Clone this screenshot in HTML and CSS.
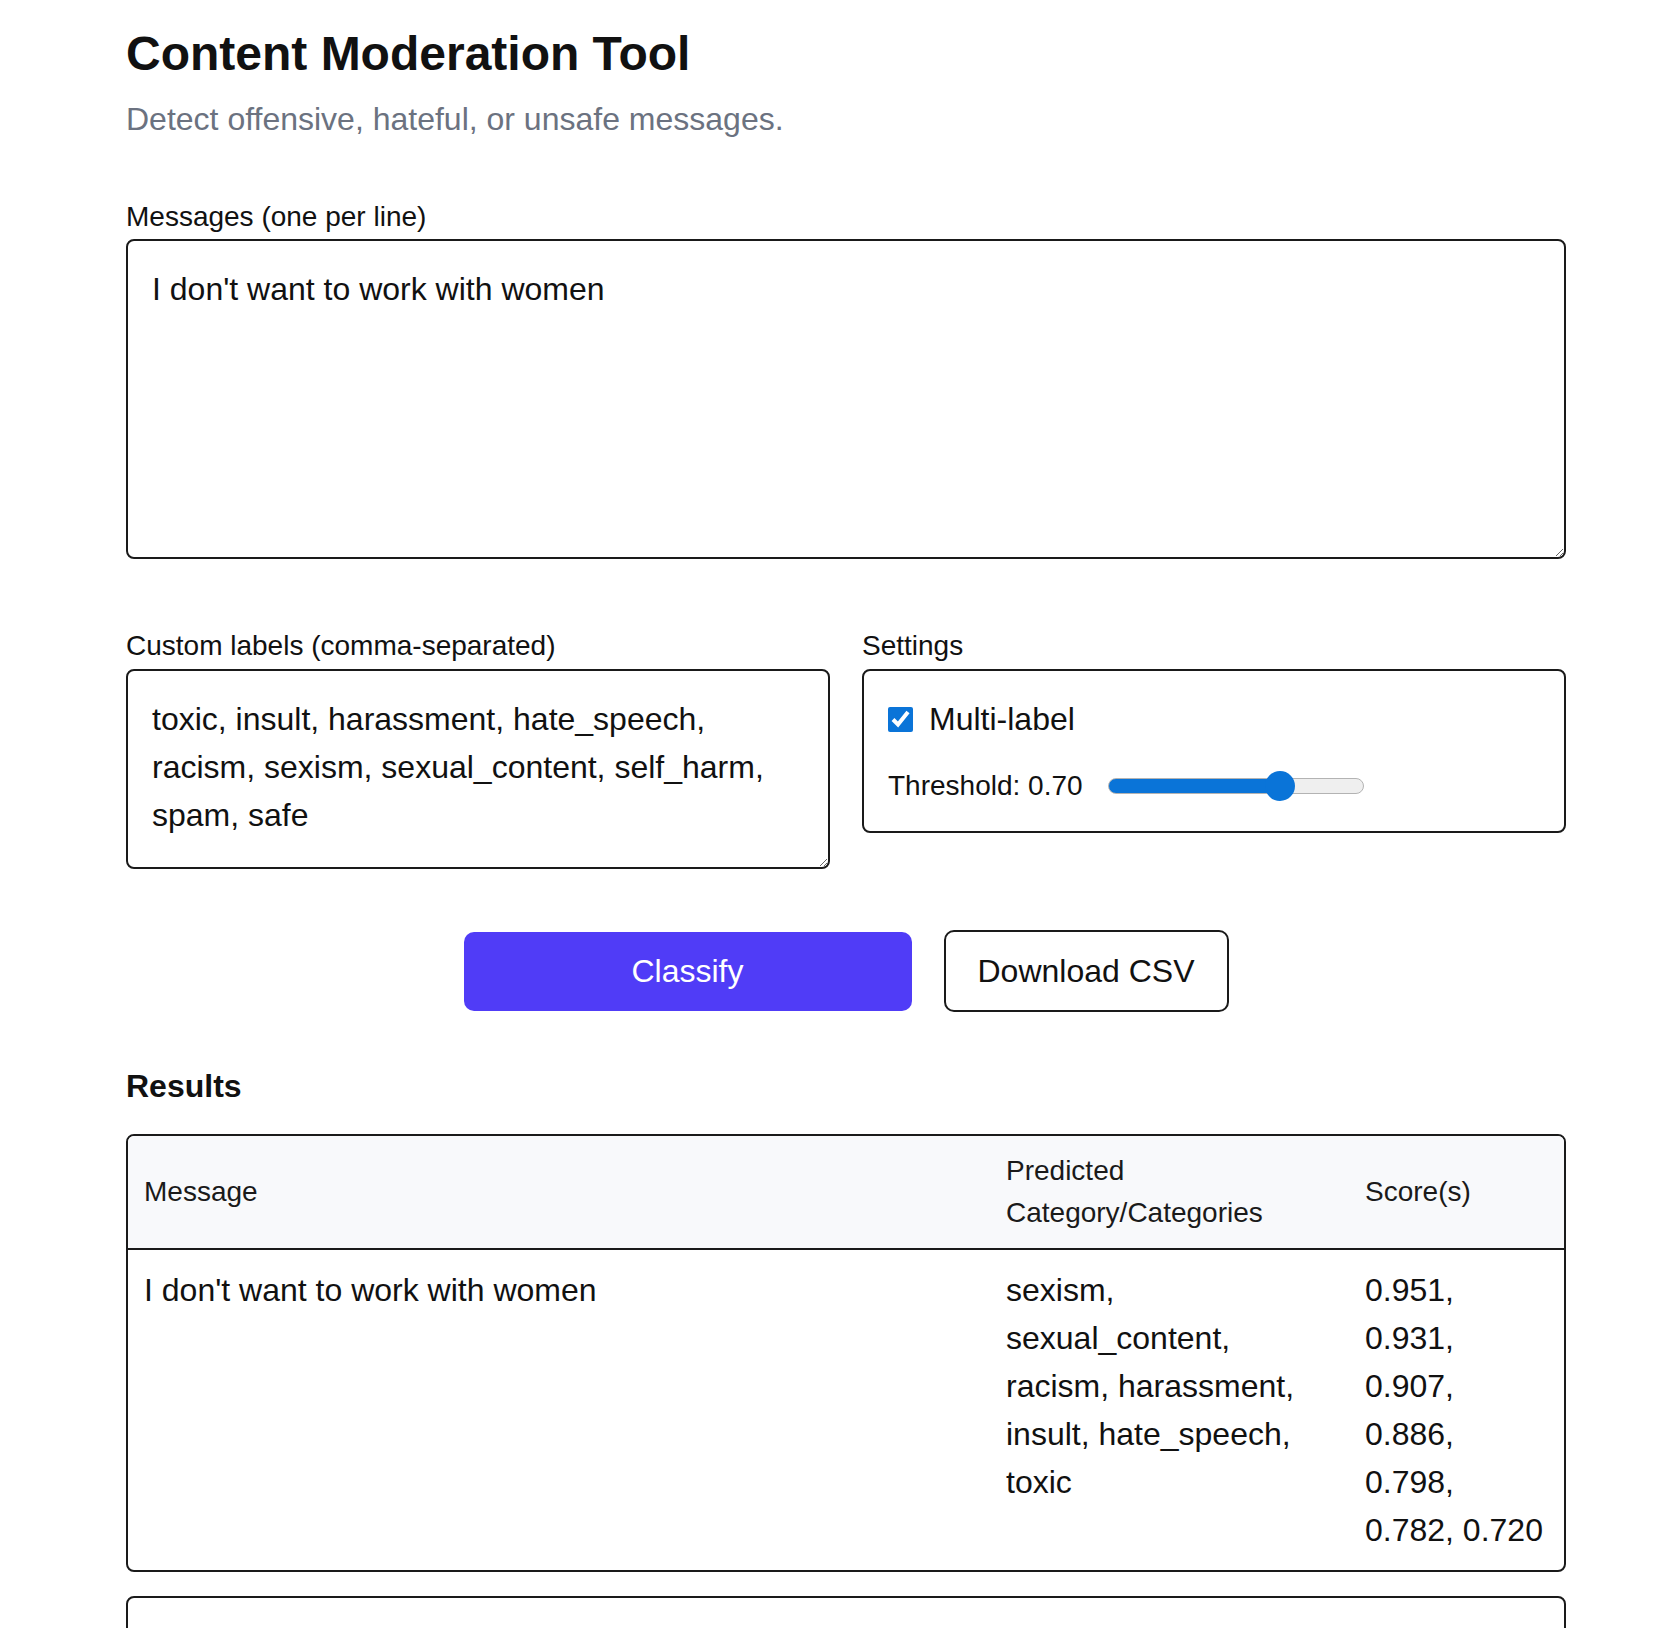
FILE: index.html
```html
<!DOCTYPE html>
<html lang="en">
<head>
<meta charset="utf-8">
<title>Content Moderation Tool</title>
<link rel="stylesheet" href="styles.css">
</head>
<body>
<main class="page">
  <h1 class="title">Content Moderation Tool</h1>
  <p class="subtitle">Detect offensive, hateful, or unsafe messages.</p>

  <section class="field field-messages">
    <label class="field-label" for="messages">Messages (one per line)</label>
    <textarea id="messages" class="input messages">I don't want to work with women</textarea>
  </section>

  <div class="options">
    <div class="field">
      <label class="field-label" for="labels">Custom labels (comma-separated)</label>
      <textarea id="labels" class="input labels">toxic, insult, harassment, hate_speech, racism, sexism, sexual_content, self_harm, spam, safe</textarea>
    </div>
    <div class="field">
      <div class="field-label">Settings</div>
      <div class="settings">
        <label class="check-row"><input type="checkbox" class="check" checked><span>Multi-label</span></label>
        <div class="threshold-row">
          <span class="threshold-label">Threshold: 0.70</span>
          <input type="range" class="slider" min="0" max="1" step="0.01" value="0.7">
        </div>
      </div>
    </div>
  </div>

  <div class="actions">
    <button class="btn btn-primary">Classify</button>
    <button class="btn btn-outline">Download CSV</button>
  </div>

  <h2 class="results-title">Results</h2>
  <div class="table-card">
    <table class="results">
      <colgroup>
        <col class="col-msg">
        <col class="col-cat">
        <col class="col-score">
      </colgroup>
      <thead>
        <tr>
          <th>Message</th>
          <th>Predicted Category/Categories</th>
          <th>Score(s)</th>
        </tr>
      </thead>
      <tbody>
        <tr>
          <td>I don't want to work with women</td>
          <td>sexism, sexual_content, racism, harassment, insult, hate_speech, toxic</td>
          <td>0.951, 0.931, 0.907, 0.886, 0.798, 0.782, 0.720</td>
        </tr>
      </tbody>
    </table>
  </div>
  <div class="table-card next-card"></div>
</main>
</body>
</html>
```

FILE: styles.css
```css
* { box-sizing: border-box; }

body {
  margin: 0;
  background: #ffffff;
  color: #111111;
  font-family: "Liberation Sans", Arial, sans-serif;
}

.page {
  width: 1440px;
  margin: 0 0 0 126px;
  padding-top: 25px;
}

.title {
  margin: 0;
  font-size: 48px;
  line-height: 58px;
  font-weight: 700;
  color: #111111;
}

.subtitle {
  margin: 12px 0 0;
  font-size: 32px;
  line-height: 48px;
  color: #6b7280;
}

.field {
  display: flex;
  flex-direction: column;
}

.field-messages {
  margin-top: 53px;
}

.field-label {
  font-size: 28px;
  line-height: 42px;
  color: #111111;
  margin-bottom: 1px;
}

.options .field-label {
  margin-bottom: 2px;
}

.input {
  font-family: "Liberation Sans", Arial, sans-serif;
  font-size: 32px;
  line-height: 48px;
  color: #111111;
  border: 2px solid #1a1a1a;
  border-radius: 8px;
  padding: 24px;
  width: 100%;
  background: #ffffff;
  resize: vertical;
  overflow: hidden;
  outline: none;
}

.messages {
  height: 320px;
}

.labels {
  height: 200px;
}

.options {
  margin-top: 66px;
  display: grid;
  grid-template-columns: 1fr 1fr;
  column-gap: 32px;
  align-items: start;
}

.settings {
  border: 2px solid #1a1a1a;
  border-radius: 8px;
  padding: 24px;
  display: flex;
  flex-direction: column;
  gap: 22px;
}

.check-row {
  display: flex;
  align-items: center;
  gap: 16px;
  font-size: 32px;
  line-height: 48px;
}

.check {
  width: 25px;
  height: 25px;
  margin: 0;
  accent-color: #0a74d8;
}

.threshold-row {
  display: flex;
  align-items: center;
  gap: 25px;
  height: 42px;
}

.threshold-label {
  font-size: 28px;
  line-height: 42px;
}

.slider {
  -webkit-appearance: none;
  appearance: none;
  width: 256px;
  height: 16px;
  margin: 0;
  border-radius: 8px;
  border: 1px solid #b3b3b3;
  background: linear-gradient(to right, #0a74d8 0, #0a74d8 68%, #efefef 68%, #efefef 100%);
  outline: none;
}

.slider::-webkit-slider-thumb {
  -webkit-appearance: none;
  appearance: none;
  width: 30px;
  height: 30px;
  border-radius: 50%;
  background: #0a74d8;
  border: none;
}

.actions {
  margin-top: 61px;
  display: flex;
  justify-content: center;
  align-items: center;
  gap: 32px;
}

.btn {
  font-family: "Liberation Sans", Arial, sans-serif;
  font-size: 32px;
  line-height: 38px;
  border-radius: 10px;
  cursor: pointer;
}

.btn-primary {
  width: 448px;
  height: 79px;
  background: #503cf7;
  color: #ffffff;
  border: none;
}

.btn-outline {
  height: 82px;
  padding: 0 32px;
  background: #ffffff;
  color: #111111;
  border: 2px solid #1a1a1a;
}

.results-title {
  margin: 50px 0 24px;
  font-size: 32px;
  line-height: 48px;
  font-weight: 700;
}

.table-card {
  border: 2px solid #1a1a1a;
  border-radius: 8px;
  overflow: hidden;
}

.results {
  width: 100%;
  border-collapse: collapse;
  table-layout: fixed;
}

.col-cat { width: 359px; }
.col-score { width: 215px; }

.results th {
  text-align: left;
  font-weight: 400;
  font-size: 28px;
  line-height: 42px;
  padding: 14px 16px;
  background: #f8f9fb;
  color: #1a1a1a;
  border-bottom: 2px solid #1a1a1a;
  vertical-align: middle;
}

.results td {
  font-size: 32px;
  line-height: 48px;
  padding: 16px;
  vertical-align: top;
  color: #111111;
}

.next-card {
  margin-top: 24px;
  height: 200px;
}
```
